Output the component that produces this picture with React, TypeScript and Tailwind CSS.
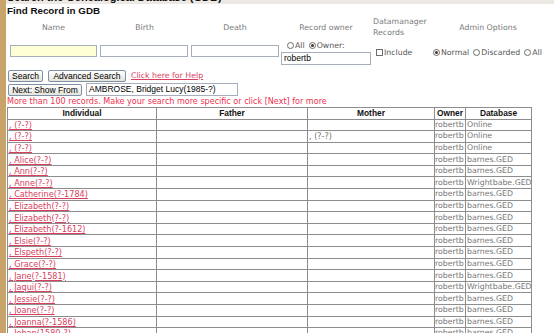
const verdana = "font-['DejaVu_Sans',Verdana,sans-serif]";
const arial = "font-['Liberation_Sans',Arial,sans-serif]";

type Row = { ind: string; mother?: string; db: string };

const rows: Row[] = [
  { ind: ", (?-?)", db: "Online" },
  { ind: ", (?-?)", mother: ", (?-?)", db: "Online" },
  { ind: ", (?-?)", db: "Online" },
  { ind: ", Alice(?-?)", db: "barnes.GED" },
  { ind: ", Ann(?-?)", db: "barnes.GED" },
  { ind: ", Anne(?-?)", db: "Wrightbabe.GED" },
  { ind: ", Catherine(?-1784)", db: "barnes.GED" },
  { ind: ", Elizabeth(?-?)", db: "barnes.GED" },
  { ind: ", Elizabeth(?-?)", db: "barnes.GED" },
  { ind: ", Elizabeth(?-1612)", db: "barnes.GED" },
  { ind: ", Elsie(?-?)", db: "barnes.GED" },
  { ind: ", Elspeth(?-?)", db: "barnes.GED" },
  { ind: ", Grace(?-?)", db: "barnes.GED" },
  { ind: ", Jane(?-1581)", db: "barnes.GED" },
  { ind: ", Jaqui(?-?)", db: "Wrightbabe.GED" },
  { ind: ", Jessie(?-?)", db: "barnes.GED" },
  { ind: ", Joane(?-?)", db: "barnes.GED" },
  { ind: ", Joanna(?-1586)", db: "barnes.GED" },
  { ind: ", Johan(1580-?)", db: "barnes.GED" },
];

function Radio({ checked = false }: { checked?: boolean }) {
  return (
    <span className="inline-flex w-[7px] h-[7px] shrink-0 items-center justify-center rounded-full border border-[#6b6b6b] bg-white">
      {checked && <span className="w-[3px] h-[3px] rounded-full bg-[#3a3a3a]" />}
    </span>
  );
}

function Button({ label, width }: { label: string; width: string }) {
  return (
    <button
      className={`${width} h-[12px] shrink-0 rounded-[2px] border border-[#7f8fa6] bg-gradient-to-b from-white to-[#e4e4dc] text-[8.5px] leading-[10px] text-black ${arial}`}
    >
      {label}
    </button>
  );
}

export default function App() {
  return (
    <div className="flex w-[554px] h-[333px] overflow-hidden bg-white">
      <div className="w-[6px] shrink-0 bg-[#c8a46a]" />
      <div className="flex-1 min-w-0">
        {/* page heading, mostly scrolled off */}
        <div className="h-[4px] overflow-hidden bg-[#ece9e4] pl-[1px]">
          <div className={`-mt-[9px] text-[11px] font-bold leading-[12px] text-[#111] ${arial}`}>
            Search the Genealogical Database (GDB)
          </div>
        </div>
        <h1 className={`pl-[1px] pt-[1px] text-[9.8px] font-bold leading-[11px] text-[#111] ${arial}`}>
          Find Record in GDB
        </h1>

        <div className={`ml-[2px] text-[7.8px] text-[#7a7a7a] ${verdana}`}>
          <div className="grid grid-cols-[91px_91px_90px_92px_59px_114px] h-[22px] items-center leading-[11px]">
            <div className="text-center">Name</div>
            <div className="text-center">Birth</div>
            <div className="text-center">Death</div>
            <div className="text-center">Record owner</div>
            <div className="pl-[1px]">
              Datamanager
              <br />
              Records
            </div>
            <div className="text-center">Admin Options</div>
          </div>

          <div className="grid grid-cols-[91px_91px_90px_92px_59px_114px] h-[29px] items-start text-[#555]">
            <div className="pt-[7px] pl-[2px]">
              <div className="w-[87px] h-[12px] border border-[#a6aebb] bg-[#ffffd6]" />
            </div>
            <div className="pt-[7px] pl-[1px]">
              <div className="w-[88px] h-[12px] border border-[#a6aebb] bg-white" />
            </div>
            <div className="pt-[7px] pl-[1px]">
              <div className="w-[88px] h-[12px] border border-[#a6aebb] bg-white" />
            </div>
            <div className="pt-[3px]">
              <div className="flex items-center h-[9px] pl-[7px] leading-[9px]">
                <Radio />
                <span className="ml-[1px] mr-[4px]">All</span>
                <Radio checked />
                <span className="ml-[1px]">Owner:</span>
              </div>
              <div
                className={`mt-[2px] ml-[1px] w-[90px] h-[13px] border border-[#a6aebb] bg-white pl-[2px] text-[8.5px] leading-[11px] text-black ${arial}`}
              >
                robertb
              </div>
            </div>
            <div className="pt-[10px] pl-[4px] flex items-center h-[9px] leading-[9px] box-content">
              <span className="w-[7px] h-[7px] shrink-0 border border-[#6b6b6b] bg-white" />
              <span className="ml-[1px]">Include</span>
            </div>
            <div className="pt-[10px] pl-[2px] flex items-center h-[9px] leading-[9px] box-content">
              <Radio checked />
              <span className="ml-[1px] mr-[4px]">Normal</span>
              <Radio />
              <span className="ml-[1px] mr-[4px]">Discarded</span>
              <Radio />
              <span className="ml-[1px]">All</span>
            </div>
          </div>
        </div>

        <div className="ml-[2px] mt-[3px] flex items-center gap-[5px]">
          <Button label="Search" width="w-[35px]" />
          <Button label="Advanced Search" width="w-[78px]" />
          <a href="#" className={`text-[7.8px] leading-[10px] text-[#d8405e] underline ${verdana}`}>
            Click here for Help
          </a>
        </div>
        <div className="ml-[2px] mt-[1px] flex items-center gap-[4px]">
          <Button label="Next: Show From" width="w-[74px]" />
          <div
            className={`w-[152px] h-[13px] border border-[#a6aebb] bg-white pl-[2px] text-[8.5px] leading-[11px] text-black ${arial}`}
          >
            AMBROSE, Bridget Lucy(1985-?)
          </div>
        </div>
        <p className={`pl-[1px] h-[11px] text-[8.05px] leading-[11px] text-[#f0304f] ${verdana}`}>
          More than 100 records. Make your search more specific or click [Next] for more
        </p>

        <table className="ml-[1px] w-[524px] table-fixed border-collapse border border-[#8d8d8d]">
          <colgroup>
            <col className="w-[149px]" />
            <col className="w-[151px]" />
            <col className="w-[127px]" />
            <col className="w-[31px]" />
            <col className="w-[66px]" />
          </colgroup>
          <thead>
            <tr className={`h-[11.5px] text-[8.4px] font-bold leading-[10px] text-[#111] ${arial}`}>
              <th className="border border-[#8d8d8d] p-0">Individual</th>
              <th className="border border-[#8d8d8d] p-0">Father</th>
              <th className="border border-[#8d8d8d] p-0">Mother</th>
              <th className="border border-[#8d8d8d] p-0">Owner</th>
              <th className="border border-[#8d8d8d] p-0">Database</th>
            </tr>
          </thead>
          <tbody className={`text-[7.8px] leading-[10px] ${verdana}`}>
            {rows.map((r, i) => (
              <tr key={i} className="h-[11.6px]">
                <td className="border border-[#8d8d8d] p-0 pl-[1px] whitespace-nowrap overflow-hidden text-[8.1px]">
                  <a href="#" className="text-[#d8405e] underline">
                    {r.ind}
                  </a>
                </td>
                <td className="border border-[#8d8d8d] p-0" />
                <td className="border border-[#8d8d8d] p-0 pl-[1px] text-[#777] text-[8.1px]">{r.mother}</td>
                <td className="border border-[#8d8d8d] p-0 text-[#777] whitespace-nowrap overflow-hidden">robertb</td>
                <td className="border border-[#8d8d8d] p-0 pl-[1px] text-[#777] whitespace-nowrap overflow-hidden">
                  {r.db}
                </td>
              </tr>
            ))}
          </tbody>
        </table>
      </div>
    </div>
  );
}
